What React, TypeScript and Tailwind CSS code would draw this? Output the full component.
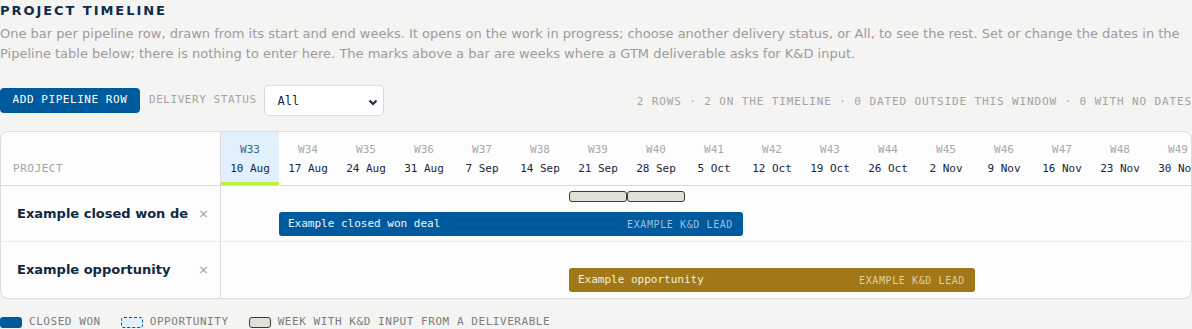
import React from "react";

const weeks = [
  { wk: "W33", date: "10 Aug" },
  { wk: "W34", date: "17 Aug" },
  { wk: "W35", date: "24 Aug" },
  { wk: "W36", date: "31 Aug" },
  { wk: "W37", date: "7 Sep" },
  { wk: "W38", date: "14 Sep" },
  { wk: "W39", date: "21 Sep" },
  { wk: "W40", date: "28 Sep" },
  { wk: "W41", date: "5 Oct" },
  { wk: "W42", date: "12 Oct" },
  { wk: "W43", date: "19 Oct" },
  { wk: "W44", date: "26 Oct" },
  { wk: "W45", date: "2 Nov" },
  { wk: "W46", date: "9 Nov" },
  { wk: "W47", date: "16 Nov" },
  { wk: "W48", date: "23 Nov" },
  { wk: "W49", date: "30 Nov" },
  { wk: "W50", date: "7 Dec" },
  { wk: "W51", date: "14 Dec" },
  { wk: "W52", date: "21 Dec" },
];

const mono = "font-['DejaVu_Sans_Mono','Liberation_Mono',monospace]";

function WeekHeader() {
  return (
    <div className="flex border-b border-[#dcdcdc]">
      <div
        className={`w-[220px] shrink-0 border-r border-[#dcdcdc] flex items-end pl-3 pb-[8px] text-[11px] leading-4 tracking-[0.05em] text-[#a3a3a3] ${mono}`}
      >
        PROJECT
      </div>
      <div className="flex-1 overflow-hidden">
        <div className="grid grid-cols-[repeat(20,58px)]">
          {weeks.map((w, i) => (
            <div
              key={w.wk}
              className={`flex flex-col items-center pt-[10px] pb-[5px] border-b-[3px] text-[11px] leading-4 ${mono} ${
                i === 0 ? "bg-[#e1f0fc] border-[#bdf03c]" : "border-transparent"
              }`}
            >
              <span className={i === 0 ? "text-[#3f6690]" : "text-[#a8a8a8]"}>{w.wk}</span>
              <span className="mt-[3px] text-[#17263d]">{w.date}</span>
            </div>
          ))}
        </div>
      </div>
    </div>
  );
}

function ProjectCell({ name }: { name: string }) {
  return (
    <div className="w-[220px] shrink-0 border-r border-[#dcdcdc] flex items-center pl-4 pr-[11px]">
      <span className="flex-1 min-w-0 overflow-hidden whitespace-nowrap text-[13px] leading-5 font-bold text-[#112843] mr-[10px]">
        {name}
      </span>
      <span className="text-[13px] leading-5 text-[#a0a0a0]">×</span>
    </div>
  );
}

function App() {
  return (
    <div className="min-h-screen w-[1192px] bg-[#f4f4f2] font-['DejaVu_Sans','Liberation_Sans',sans-serif] overflow-hidden">
      <h2 className="pt-[1px] text-[13px] leading-5 font-bold tracking-[0.15em] text-[#0d2b4c]">
        PROJECT TIMELINE
      </h2>
      <p className="mt-[3px] text-[13px] leading-5 text-[#9c9c9c]">
        One bar per pipeline row, drawn from its start and end weeks. It opens on the work in progress; choose another
        delivery status, or All, to see the rest. Set or change the dates in the Pipeline table below; there is nothing
        to enter here. The marks above a bar are weeks where a GTM deliverable asks for K&amp;D input.
      </p>

      <div className={`mt-[21px] h-[31px] flex items-center ${mono}`}>
        <button className="w-[140px] h-[25px] rounded-[4px] bg-[#005a9e] text-white text-[11px] tracking-[0.05em]">
          ADD PIPELINE ROW
        </button>
        <span className="ml-[9px] text-[11px] tracking-[0.05em] text-[#a3a3a3]">DELIVERY STATUS</span>
        <div className="ml-[7px] relative w-[120px] h-[31px] rounded-[4px] border border-[#dadada] bg-white flex items-center pl-[13px]">
          <span className="text-[12px] text-[#17263d]">All</span>
          <svg className="absolute right-[5px] top-[13px]" width="10" height="7" viewBox="0 0 10 7">
            <path d="M1.5 1.5l3.5 3.5 3.5-3.5" fill="none" stroke="#17263d" strokeWidth="2" />
          </svg>
        </div>
        <span className="ml-auto mt-[3px] text-[11px] tracking-[0.08em] text-[#a3a3a3] whitespace-nowrap">
          2 ROWS · 2 ON THE TIMELINE · 0 DATED OUTSIDE THIS WINDOW · 0 WITH NO DATES
        </span>
      </div>

      <div className="mt-[15px] rounded-lg border border-[#dcdcdc] bg-[#fdfdfd] overflow-hidden">
        <WeekHeader />

        <div className="flex h-[56px] border-b border-[#ececec]">
          <ProjectCell name="Example closed won deal" />
          <div className="flex-1 overflow-hidden">
            <div className="grid grid-cols-[repeat(20,58px)] grid-rows-[26px_24px]">
              <div className="col-start-7 row-start-1 mt-[5px] h-[11px] rounded-[3px] border border-[#3a3a36] bg-[#e0e2d8]" />
              <div className="col-start-8 row-start-1 mt-[5px] h-[11px] rounded-[3px] border border-[#3a3a36] bg-[#e0e2d8]" />
              <div
                className={`col-start-2 col-span-8 row-start-2 rounded-[3px] bg-[#005a9e] flex items-center justify-between pl-[9px] pr-[10px] text-[11px] ${mono}`}
              >
                <span className="text-[#f2f6fa]">Example closed won deal</span>
                <span className="text-[10px] tracking-[0.06em] text-[#9cc0dd]">EXAMPLE K&amp;D LEAD</span>
              </div>
            </div>
          </div>
        </div>

        <div className="flex h-[56px]">
          <ProjectCell name="Example opportunity" />
          <div className="flex-1 overflow-hidden">
            <div className="grid grid-cols-[repeat(20,58px)] grid-rows-[26px_24px]">
              <div
                className={`col-start-7 col-span-7 row-start-2 rounded-[3px] bg-[#a07818] flex items-center justify-between pl-[9px] pr-[10px] text-[11px] ${mono}`}
              >
                <span className="text-[#f6efdc]">Example opportunity</span>
                <span className="text-[10px] tracking-[0.06em] text-[#e0cf9f]">EXAMPLE K&amp;D LEAD</span>
              </div>
            </div>
          </div>
        </div>
      </div>

      <div className={`mt-[15px] flex items-center text-[11px] leading-4 tracking-[0.05em] text-[#7c7c7c] ${mono}`}>
        <span className="w-[22px] h-[11px] rounded-[3px] bg-[#005a9e]" />
        <span className="ml-[7px]">CLOSED WON</span>
        <span className="ml-[20px] w-[22px] h-[11px] rounded-[3px] border border-dashed border-[#005a9e] bg-[#e1f0fc]" />
        <span className="ml-[7px]">OPPORTUNITY</span>
        <span className="ml-[20px] w-[22px] h-[11px] rounded-[3px] border border-[#3a3a36] bg-[#e0e2d8]" />
        <span className="ml-[7px]">WEEK WITH K&amp;D INPUT FROM A DELIVERABLE</span>
      </div>
    </div>
  );
}

export default App;
